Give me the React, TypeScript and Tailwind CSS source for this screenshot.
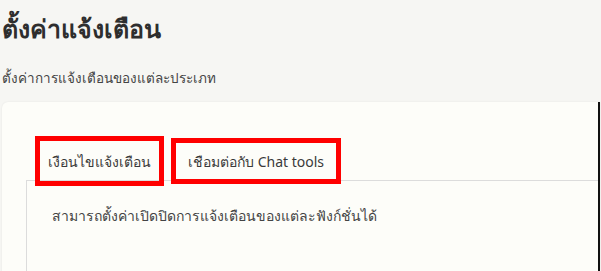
export default function App() {
  return (
    <div className="h-[271px] w-[601px] overflow-hidden bg-[#f6f6f3] font-['Noto_Sans','Liberation_Sans',sans-serif] text-[#3a3a3a]">
      <h1 className="pl-[2px] pt-[12px] text-[25px] font-bold leading-[32px] text-[#2e2e2e]">ตั้งค่าแจ้งเตือน</h1>
      <p className="mt-[24px] pl-[2px] text-[13.5px] leading-[20px] text-[#444]">ตั้งค่าการแจ้งเตือนของแต่ละประเภท</p>
      <div className="ml-[2px] mt-[14px] flex h-[200px] w-[598px] rounded-tl-[6px] border-r-2 border-r-[#111] bg-[#fdfdf9] shadow-[0_0_2px_rgba(0,0,0,0.08)]">
        <div className="flex-1 pt-[34px]">
          <div className="flex h-[44px] items-start pl-[33px]">
            <div className="relative z-10 flex h-[50px] w-[129px] items-center justify-center border-[5px] border-[#ff0000] text-[14px] text-[#3a3a3a]">
              เงือนไขแจ้งเตือน
            </div>
            <div className="relative z-10 ml-[7px] mt-[2px] flex h-[46px] w-[170px] items-center justify-center border-[5px] border-[#ff0000] text-[14px] text-[#3a3a3a]">
              เชือมต่อกับ Chat tools
            </div>
          </div>
          <div className="ml-[24px] h-[100px] border-l border-t border-[#dcdcdc] pl-[25px] pt-[24px]">
            <p className="text-[14px] leading-[22px] text-[#444]">สามารถตั้งค่าเปิดปิดการแจ้งเตือนของแต่ละฟังก์ชั่นได้</p>
          </div>
        </div>
      </div>
    </div>
  );
}
